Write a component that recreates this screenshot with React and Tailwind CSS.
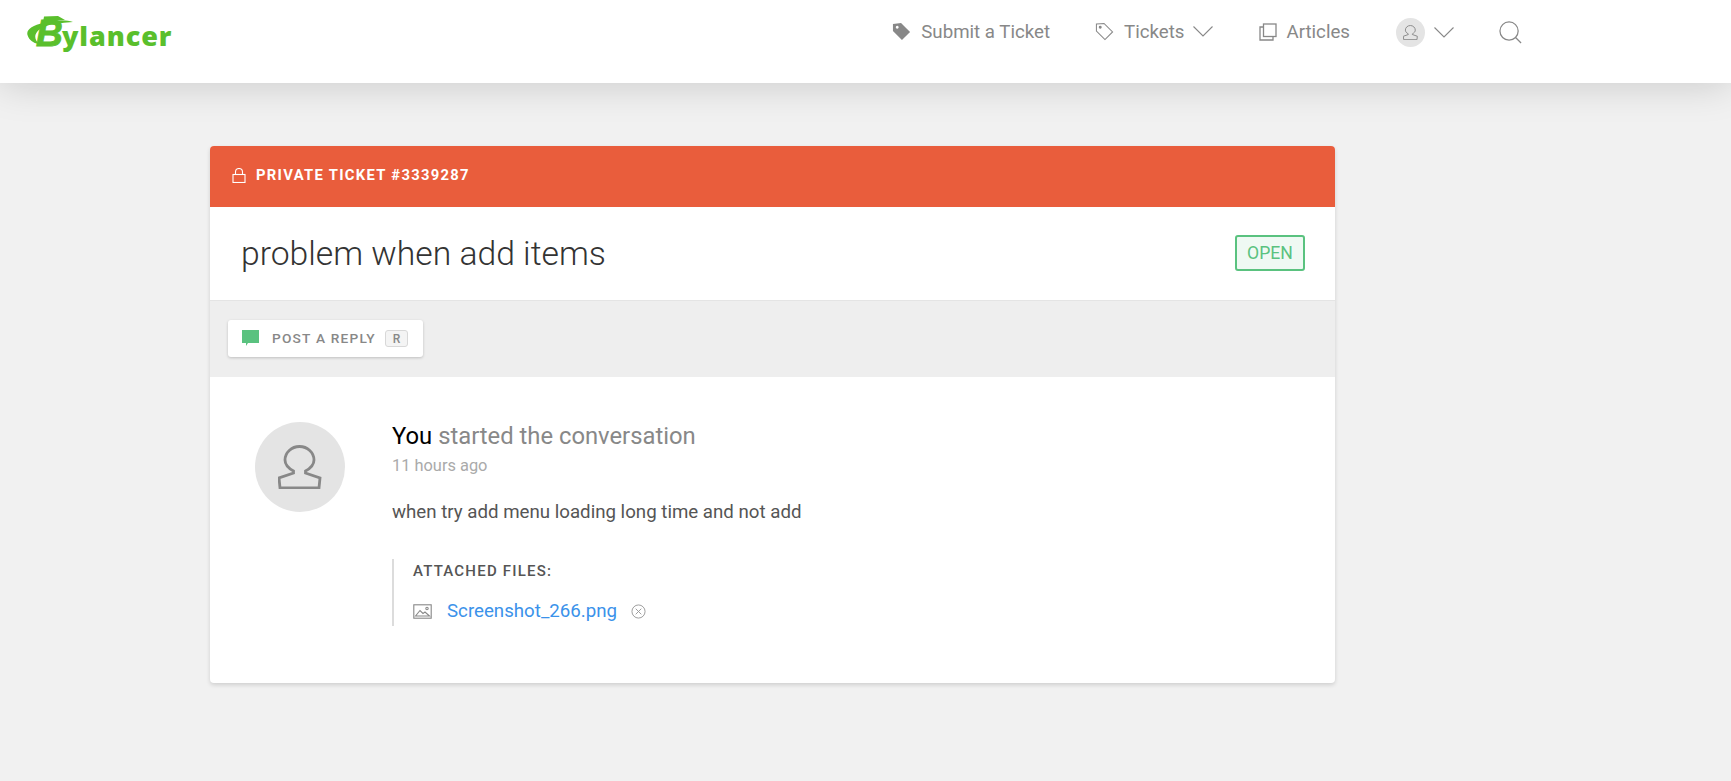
function UserGlyph({ className }) {
  return (
    <svg viewBox="0 0 44 44" fill="none" stroke="currentColor" strokeWidth="2.800" className={className}>
      <path d="M15.500 28 L15.500 26 C10 23 7 19.500 7 15 A14.500 13.500 0 0 1 36 15 C36 19.500 33 23 27.500 26 L27.500 28 L42 33 L41 43 L2 43 L1 33 Z" />
    </svg>
  )
}

function Chevron({ className }) {
  return (
    <svg viewBox="0 0 20 11" fill="none" stroke="#888" strokeWidth="1.100" className={className}>
      <path d="M0.500 0.500 L10 10 L19.500 0.500" />
    </svg>
  )
}

function Logo() {
  return (
    <div className="relative w-[146px] h-[36px] mt-[-17px] text-[#5abf2c]">
      <svg viewBox="0 0 146 36" className="absolute inset-0 w-full h-full" fill="currentColor">
        <path d="M17 8 C5 10 -1 15 0.500 20 C2 25 6 28 12 29 C8 25 7 21 10 17 C13 13 20 10 28 9 C34 8 40 7.500 46 7 C38 4.500 27 5.500 17 8 Z" />
        <path d="M17 1.500 L31 1 L38 5 L16 7 Z" />
      </svg>
      <span className="absolute left-[9px] top-[-2px] font-['Liberation_Sans',sans-serif] font-bold italic text-[37px] leading-[42px] [-webkit-text-stroke:1px_#5abf2c]">B</span>
      <span className="absolute left-[35px] top-[4px] font-['Open_Sans',sans-serif] font-extrabold text-[27px] leading-[34px] tracking-[0.9px]">ylancer</span>
    </div>
  )
}

export default function App() {
  return (
    <div className="min-h-[781px] bg-[#f1f1f1] font-['Roboto',sans-serif] overflow-hidden">
      {/* header */}
      <header className="relative h-[83px] bg-white shadow-[0_0_40px_rgba(0,0,0,0.18)] flex items-center pl-[27px] pr-[210px] text-[#888] text-[18.7px]">
        <Logo />
        <nav className="ml-auto flex items-center h-[62px] mt-[-19px]">
          <a className="flex items-center">
            <svg viewBox="0 0 20 20" className="w-[19px] h-[19px] mr-[10px]" fill="#888">
              <path d="M1 2 L9.500 1 L19 10.500 L10.500 19 L1 9.500 Z M5.500 4 A1.500 1.500 0 1 0 5.510 4 Z" fillRule="evenodd" />
            </svg>
            Submit a Ticket
          </a>
          <a className="flex items-center ml-[45px]">
            <svg viewBox="0 0 20 20" className="w-[19px] h-[19px] mr-[10px]" fill="none" stroke="#888" strokeWidth="1.100">
              <path d="M1.500 2 L9.500 1.500 L18.500 10.500 L10.500 18.500 L1.500 9.500 Z" />
              <circle cx="5.500" cy="5.500" r="1" fill="#888" />
            </svg>
            Tickets
            <Chevron className="w-[20px] h-[11px] ml-[9px]" />
          </a>
          <a className="flex items-center ml-[45px]">
            <svg viewBox="0 0 20 20" className="w-[20px] h-[20px] mr-[8px]" fill="none" stroke="#888" strokeWidth="1.300">
              <rect x="5.500" y="2" width="12.500" height="12.500" />
              <path d="M5.500 5 H2 V18 H15 V14.500" />
            </svg>
            Articles
          </a>
          <div className="flex items-center ml-[46px]">
            <div className="w-[29px] h-[29px] rounded-full bg-[#e4e4e4] flex items-center justify-center text-[#888]">
              <UserGlyph className="w-[15px] h-[15px]" />
            </div>
            <Chevron className="w-[20px] h-[11px] ml-[9px]" />
          </div>
          <svg viewBox="0 0 24 24" className="w-[23px] h-[23px] ml-[45px] mr-[-1px]" fill="none" stroke="#888" strokeWidth="1.300">
            <circle cx="10.500" cy="10.500" r="9.500" />
            <path d="M17 17 L23 23" />
          </svg>
        </nav>
      </header>

      {/* ticket card */}
      <main className="ml-[210px] mt-[63px] w-[1125px] h-[537px] bg-white rounded-[4px] shadow-[0_2px_4px_rgba(0,0,0,0.14)] overflow-hidden">
        <div className="h-[61px] bg-[#e95d3c] flex items-center pl-[22px] pb-[2px] text-white text-[14.8px] font-bold tracking-[1.3px]">
          <svg viewBox="0 0 14 15" className="w-[14px] h-[15px] mr-[10px]" fill="none" stroke="#fff" strokeWidth="1.100">
            <rect x="1" y="6.500" width="12" height="8" />
            <path d="M3.500 6.500 V4 A3.500 3.500 0 0 1 10.500 4 V6.500" />
          </svg>
          PRIVATE TICKET #3339287
        </div>

        <div className="h-[93px] flex items-center justify-between pl-[31px] pr-[30px]">
          <h1 className="text-[33.7px] font-light text-[#333] leading-none">problem when add items</h1>
          <span className="w-[70px] h-[36px] mb-[2px] pt-[1px] flex items-center justify-center rounded-[3px] border-2 border-[#5ac27f] bg-[#eff9f3] text-[#5ac27f] text-[17.6px]">OPEN</span>
        </div>

        <div className="h-[77px] bg-[#eeeeee] border-t border-[#e4e4e4] flex items-center pl-[18px] pb-[1px]">
          <button className="h-[37px] w-[195px] bg-white rounded-[3px] shadow-[0_1px_3px_rgba(0,0,0,0.2)] flex items-center pl-[14px] text-[#888] text-[13.7px] font-medium tracking-[1.2px]">
            <svg viewBox="0 0 17 17" className="w-[17px] h-[17px] mr-[13px]" fill="#5ac27f">
              <path d="M0 0 H17 V13 H6 L4 16 V13 H0 Z" />
            </svg>
            POST A REPLY
            <span className="ml-[9px] w-[23px] h-[17px] rounded-[3px] border border-[#d8d8d8] bg-[#f4f4f4] flex items-center justify-center text-[12px] tracking-normal">R</span>
          </button>
        </div>

        <div className="flex pt-[45px] pl-[45px]">
          <div className="w-[90px] h-[90px] rounded-full bg-[#e4e4e4] flex items-center justify-center text-[#888] shrink-0">
            <UserGlyph className="w-[44px] h-[44px]" />
          </div>
          <div className="ml-[47px]">
            <div className="text-[23.8px] leading-[28px] text-[#888]"><span className="text-black">You</span> started the conversation</div>
            <div className="text-[16.4px] leading-[20px] mt-[6px] text-[#aaa]">11 hours ago</div>
            <p className="text-[18.7px] leading-[24px] mt-[24px] text-[#555]">when try add menu loading long time and not add</p>
            <div className="mt-[35px] h-[67px] border-l-2 border-[#dcdcdc] pl-[19px]">
              <div className="text-[15px] font-medium leading-[16px] pt-[4px] tracking-[1.2px] text-[#555]">ATTACHED FILES:</div>
              <div className="flex items-center mt-[20px] h-[24px]">
                <svg viewBox="0 0 19 15" className="w-[19px] h-[15px] mr-[15px]" fill="none" stroke="#888" strokeWidth="1.100">
                  <rect x="0.800" y="0.800" width="17.400" height="13.400" />
                  <path d="M2.500 12 L7 6.500 L10 9.500 L12 8 L16.500 12 Z" />
                  <circle cx="14" cy="4.500" r="1.200" />
                </svg>
                <a className="text-[#3b92ea] text-[18.7px]">Screenshot_266.png</a>
                <svg viewBox="0 0 16 16" className="w-[15px] h-[15px] ml-[14px] mt-[1px]" fill="none" stroke="#999" strokeWidth="1">
                  <circle cx="8" cy="8" r="7" />
                  <path d="M5 5 L11 11 M11 5 L5 11" />
                </svg>
              </div>
            </div>
          </div>
        </div>
      </main>
    </div>
  )
}
